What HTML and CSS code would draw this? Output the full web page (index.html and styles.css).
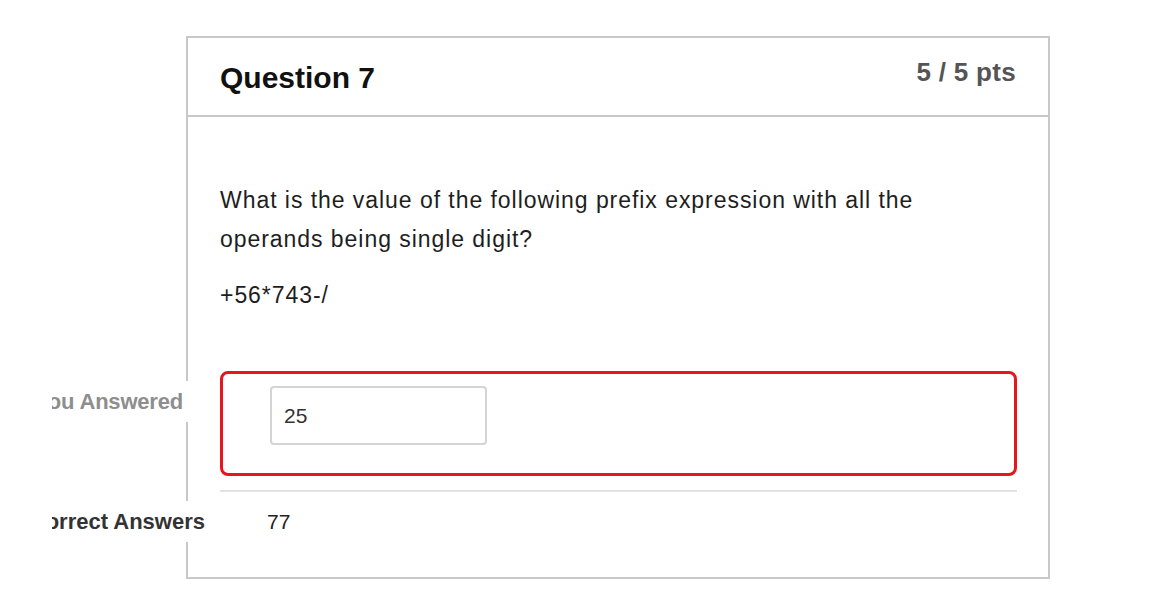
FILE: index.html
```html
<!DOCTYPE html>
<html>
<head>
<meta charset="utf-8">
<link rel="stylesheet" href="styles.css">
</head>
<body>
<div class="page">
  <div class="card">
    <div class="card-header">
      <h2 class="title">Question 7</h2>
      <div class="points">5 / 5 pts</div>
    </div>
    <div class="card-body">
      <p class="question">What is the value of the following prefix expression with all the<br>operands being single digit?</p>
      <p class="expr">+56*743-/</p>
      <div class="answer answer-wrong">
        <span class="answer-label label-you">You Answered</span>
        <div class="answer-input">25</div>
      </div>
      <div class="answer answer-correct">
        <span class="answer-label label-correct">Correct Answers</span>
        <span class="answer-text">77</span>
      </div>
    </div>
  </div>
</div>
</body>
</html>
```

FILE: styles.css
```css
* { box-sizing: border-box; }

body {
  margin: 0;
  background: #fff;
  font-family: "Liberation Sans", Arial, sans-serif;
  color: #222;
}

.page {
  margin-left: 52px;
  padding: 36px 0 0 134px;
  height: 604px;
  overflow: hidden;
}

.card {
  width: 864px;
  border: 2px solid #c8c8c8;
}

.card-header {
  height: 79px;
  padding: 20px 32px 0 32px;
  border-bottom: 2px solid #c8c8c8;
  display: flex;
  justify-content: space-between;
  align-items: flex-start;
}

.title {
  margin: 5px 0 0 0;
  font-size: 30px;
  line-height: 30px;
  font-weight: bold;
  color: #111;
}

.points {
  font-size: 26px;
  line-height: 28px;
  font-weight: bold;
  color: #555;
  letter-spacing: 0.3px;
}

.card-body {
  padding: 64px 31px 43px 32px;
}

.question {
  margin: 0;
  font-size: 23px;
  line-height: 39px;
  letter-spacing: 0.95px;
  color: #1e1e1e;
}

.expr {
  margin: 17px 0 0 0;
  font-size: 23px;
  line-height: 39px;
  letter-spacing: 0.95px;
  color: #1e1e1e;
}

.answer {
  position: relative;
}

.answer-wrong {
  margin-top: 56px;
  height: 105px;
  border: 3px solid #e8161c;
  border-radius: 8px;
  padding: 12px 0 0 47px;
}

.answer-input {
  width: 217px;
  height: 59px;
  border: 2px solid #d4d4d4;
  border-radius: 4px;
  padding-left: 12px;
  font-size: 21px;
  line-height: 55px;
  color: #333;
}

.answer-correct {
  margin-top: 14px;
  border-top: 2px solid #e2e2e2;
  padding: 18px 0 0 47px;
}

.answer-text {
  font-size: 21px;
  line-height: 24px;
  color: #222;
}

.answer-label {
  position: absolute;
  white-space: nowrap;
  background: #fff;
  font-weight: bold;
  font-size: 22px;
  line-height: 41px;
}

.label-you {
  top: 7px;
  right: calc(100% + 30px);
  padding: 0 10px 0 4px;
  color: #8e8e8e;
  letter-spacing: -0.2px;
}

.label-correct {
  top: 9px;
  right: calc(100% + 15px);
  padding: 0 0 0 4px;
  color: #333;
}
```
